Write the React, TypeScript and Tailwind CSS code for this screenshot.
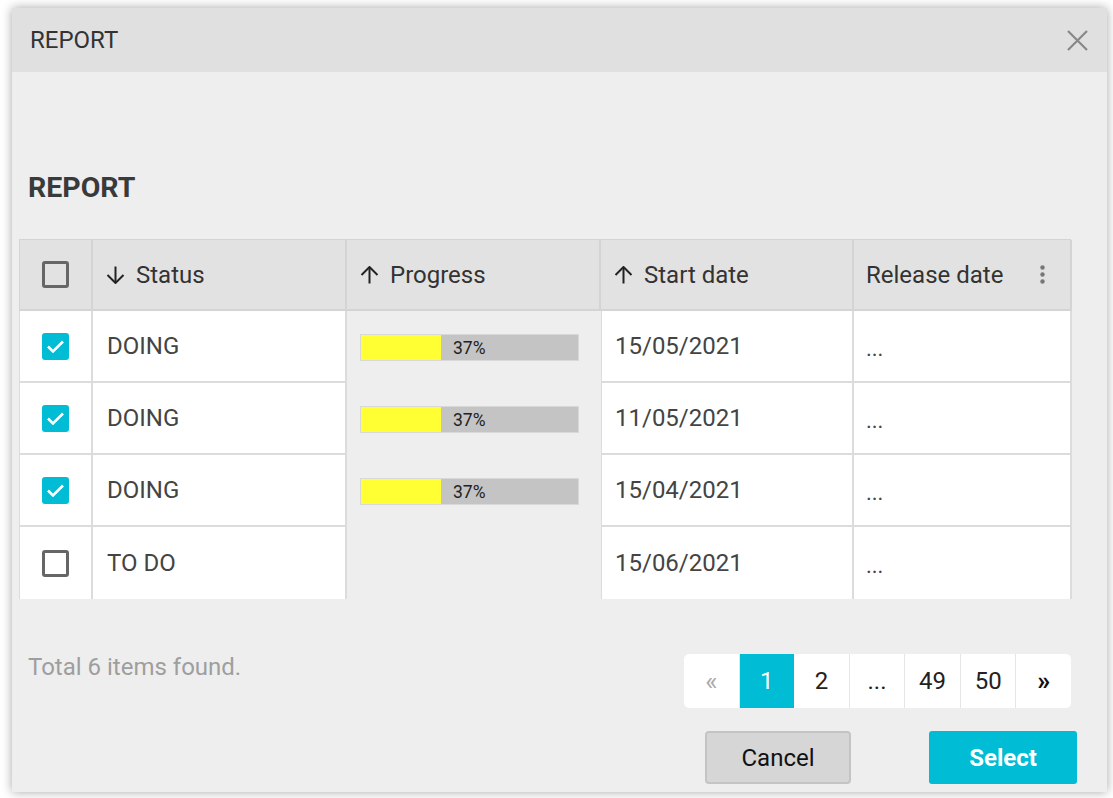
import React from "react";

const rows = [
  { checked: true, status: "DOING", progress: 37, start: "15/05/2021" },
  { checked: true, status: "DOING", progress: 37, start: "11/05/2021" },
  { checked: true, status: "DOING", progress: 37, start: "15/04/2021" },
  { checked: false, status: "TO DO", progress: null, start: "15/06/2021" },
];

const pages = ["1", "2", "...", "49", "50"];

const Arrow: React.FC<{ up?: boolean }> = ({ up }) => (
  <svg
    width="21"
    height="18"
    viewBox="0 0 21 18"
    fill="none"
    stroke="#222"
    strokeWidth="2"
    className={up ? "rotate-180" : ""}
  >
    <path d="M10.5 0.5V16.5" />
    <path d="M2.5 9l8 8 8-8" />
  </svg>
);

const Checkbox: React.FC<{ checked: boolean }> = ({ checked }) =>
  checked ? (
    <div className="flex h-[27px] w-[27px] items-center justify-center rounded-[3px] bg-[#00bcd4]">
      <svg width="19" height="15" viewBox="0 0 19 15" fill="none" stroke="white" strokeWidth="2.6">
        <path d="M2 7.5l5 5 10-10" />
      </svg>
    </div>
  ) : (
    <div className="h-[27px] w-[27px] rounded-[3px] border-[3px] border-[#666]" />
  );

const ProgressBar: React.FC<{ value: number }> = ({ value }) => (
  <div className="relative flex h-[27px] w-[219px] border border-[#d8d8d8] bg-[#c4c4c4]">
    <div className="h-full w-[80px] bg-[#ffff33]" />
    <span className="absolute left-[92px] top-0 text-[17.5px] leading-[26px] text-[#222]">
      {value}%
    </span>
  </div>
);

const App: React.FC = () => {
  return (
    <div className="min-h-screen bg-white pl-[12px] pt-[8px] font-['Roboto',sans-serif]">
      <div className="flex h-[784px] w-[1095px] flex-col bg-[#eeeeee] shadow-[0_0_10px_rgba(0,0,0,0.35)]">
        <div className="flex h-[64px] shrink-0 items-center justify-between bg-[#e0e0e0] pl-[18px] pr-[19px]">
          <span className="text-[24px] text-[#333]">REPORT</span>
          <svg width="21" height="21" viewBox="0 0 21 21" stroke="#888" strokeWidth="2.2">
            <path d="M1 1l19 19M20 1L1 20" />
          </svg>
        </div>

        <div className="flex flex-1 flex-col px-[7px] pt-[98px]">
          <h2 className="pl-[9px] text-[28.5px] font-bold leading-[36px] text-[#3a3a3a]">
            REPORT
          </h2>

          <div className="mt-[33px] w-[1052px] text-[24px] text-[#444]">
            <div className="grid h-[72px] grid-cols-[73px_254px_254px_253px_218px] border-l border-t border-[#d4d4d4]">
              <div className="flex items-center justify-center border-b-2 border-r-2 border-[#d4d4d4] bg-[#e2e2e2]">
                <Checkbox checked={false} />
              </div>
              <div className="flex items-center gap-[10px] border-b-2 border-r-2 border-[#d4d4d4] bg-[#e2e2e2] pl-[12px] text-[#333]">
                <Arrow />
                Status
              </div>
              <div className="flex items-center gap-[10px] border-b-2 border-r-2 border-[#d4d4d4] bg-[#e2e2e2] pl-[12px] text-[#333]">
                <Arrow up />
                Progress
              </div>
              <div className="flex items-center gap-[10px] border-b-2 border-r-2 border-[#d4d4d4] bg-[#e2e2e2] pl-[12px] text-[#333]">
                <Arrow up />
                Start date
              </div>
              <div className="flex items-center justify-between border-b-2 border-r-2 border-[#d4d4d4] bg-[#e2e2e2] pl-[12px] pr-[25px] text-[#333]">
                Release date
                <svg width="5" height="19" viewBox="0 0 5 19" fill="#777">
                  <circle cx="2.5" cy="2.5" r="2.2" />
                  <circle cx="2.5" cy="9.5" r="2.2" />
                  <circle cx="2.5" cy="16.5" r="2.2" />
                </svg>
              </div>
            </div>

            {rows.map((row, i) => {
              const last = i === rows.length - 1;
              const cell = last
                ? "border-r-2 border-[#dcdcdc] bg-white"
                : "border-b-2 border-r-2 border-[#dcdcdc] bg-white";
              return (
                <div
                  key={i}
                  className="grid h-[72px] grid-cols-[73px_254px_254px_253px_218px] border-l border-[#dcdcdc]"
                >
                  <div className={`flex items-center justify-center ${cell}`}>
                    <Checkbox checked={row.checked} />
                  </div>
                  <div className={`flex items-center pl-[14px] ${cell}`}>{row.status}</div>
                  <div className="flex items-center pl-[13px]">
                    {row.progress !== null && <ProgressBar value={row.progress} />}
                  </div>
                  <div className={`flex items-center border-l pl-[13px] ${cell}`}>
                    {row.start}
                  </div>
                  <div className={`flex items-center pl-[12px] pt-[4px] text-[22px] ${cell}`}>
                    ...
                  </div>
                </div>
              );
            })}
          </div>

          <div className="mt-[55px] flex w-[1052px] items-start justify-between">
            <span className="pl-[9px] text-[24px] leading-[26px] text-[#9e9e9e]">
              Total 6 items found.
            </span>
            <div className="flex h-[54px] w-[387px] overflow-hidden rounded-[5px] bg-white text-[24px] text-[#222]">
              <div className="flex flex-1 items-center justify-center border-r border-[#e6e6e6] text-[26px] text-[#aaa]">
                «
              </div>
              {pages.map((p) => (
                <div
                  key={p}
                  className={
                    p === "1"
                      ? "flex flex-1 items-center justify-center bg-[#00bcd4] text-white"
                      : "flex flex-1 items-center justify-center border-r border-[#e6e6e6]"
                  }
                >
                  {p}
                </div>
              ))}
              <div className="flex flex-1 items-center justify-center text-[26px] font-bold text-[#111]">
                »
              </div>
            </div>
          </div>

          <div className="mt-[23px] flex justify-end gap-[78px] pr-[23px]">
            <button className="h-[53px] w-[146px] rounded-[4px] border-2 border-[#c4c4c4] bg-[#d6d6d6] text-[24px] text-[#111]">
              Cancel
            </button>
            <button className="h-[53px] w-[148px] rounded-[3px] bg-[#00bcd4] text-[24px] font-bold text-white">
              Select
            </button>
          </div>
        </div>
      </div>
    </div>
  );
};

export default App;
